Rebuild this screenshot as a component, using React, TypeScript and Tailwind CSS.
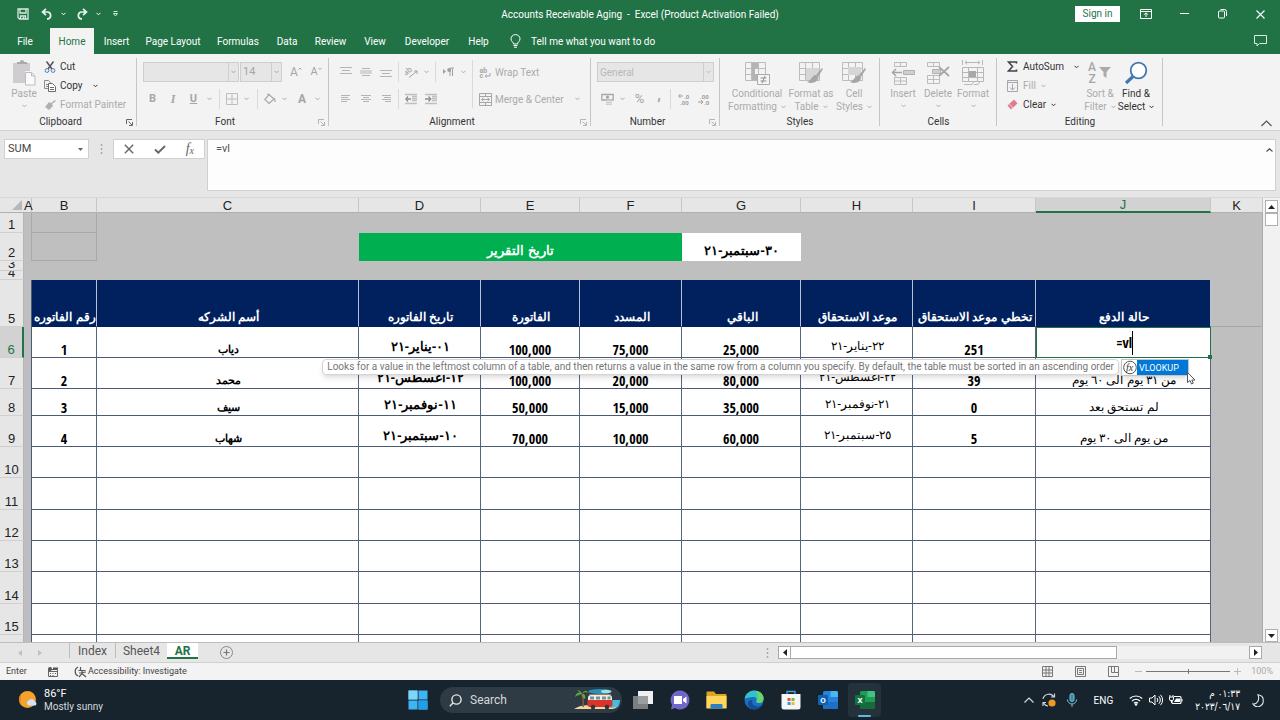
import React from "react";
import type { ReactNode } from "react";

const UI = "font-['Roboto','Noto_Sans',sans-serif]";
const AR = "font-['Noto_Sans',serif]";

function Svg({ w, h, vb, className = "", children }: { w: number; h: number; vb?: string; className?: string; children: ReactNode }) {
  return (
    <svg width={w} height={h} viewBox={vb ?? `0 0 ${w} ${h}`} fill="none" className={`shrink-0 ${className}`} aria-hidden="true">
      {children}
    </svg>
  );
}

function Chevron({ className = "" }: { className?: string }) {
  return (
    <Svg w={5} h={4} className={className}>
      <path d="M0.5 0.8 2.5 2.8 4.5 0.8" stroke="currentColor" />
    </Svg>
  );
}

function Slot({ label, className, children }: { label: string; className: string; children: ReactNode }) {
  return (
    <button type="button" aria-label={label} className={`flex h-5 shrink-0 items-center justify-center ${className}`}>
      {children}
    </button>
  );
}

function Sep({ className = "" }: { className?: string }) {
  return <span className={`h-5 w-px shrink-0 bg-[#dadada] ${className}`} />;
}

function Launcher({ dark = false }: { dark?: boolean }) {
  return (
    <button type="button" aria-label="More options" className={`absolute bottom-1 right-1 ${dark ? "text-[#666]" : "text-[#b5b5b5]"}`}>
      <Svg w={7} h={7}>
        <path d="M0.5 5V0.5H6M2.5 2.5 6 6M6.5 3V6.5H3" stroke="currentColor" />
      </Svg>
    </button>
  );
}

function Group({ title, className, launcher, children }: { title: string; className: string; launcher?: "dark" | "light"; children: ReactNode }) {
  return (
    <section aria-label={title} className={`relative flex shrink-0 flex-col ${className}`}>
      <div className="flex h-[62px] items-start">{children}</div>
      <div className={`flex h-4 items-center justify-center text-[10px] leading-4 text-[#333] ${launcher ? "pr-4" : ""}`}>{title}</div>
      {launcher && <Launcher dark={launcher === "dark"} />}
      <span className="absolute bottom-1 right-0 top-1 w-px bg-[#c6c6c6]" />
    </section>
  );
}

function BigButton({ icon, lines, className, dark = false, below = false }: { icon: ReactNode; lines: string[]; className: string; dark?: boolean; below?: boolean }) {
  return (
    <button type="button" className={`flex shrink-0 flex-col items-center whitespace-nowrap pt-[5px] text-[10px] leading-[13px] ${dark ? "text-[#333]" : "text-[#ababab]"} ${className}`}>
      <span className="flex h-7 items-center">{icon}</span>
      {lines.map((line, i) => (
        <span key={line} className="flex items-center gap-1">
          {line}
          {!below && i === lines.length - 1 && <Chevron />}
        </span>
      ))}
      {below && <Chevron className="mt-1" />}
    </button>
  );
}

function AlignIcon({ kind }: { kind: "top" | "middle" | "bottom" | "left" | "center" | "right" }) {
  const paths = {
    top: "M0 1.5H12M2 4.5H10M0 7.5H12",
    middle: "M2 2.5H10M0 5H12M0 7H12M2 9.5H10",
    bottom: "M0 4.5H12M2 7.5H10M0 10.5H12",
    left: "M1 2.5H10M1 4.5H8M1 6.5H10M1 8.5H7",
    center: "M1 2.5H11M3 4.5H9M1 6.5H11M3 8.5H9",
    right: "M2 2.5H11M4 4.5H11M2 6.5H11M5 8.5H11",
  };
  return (
    <Svg w={12} h={12}>
      <path d={paths[kind]} stroke="#b5b5b5" />
    </Svg>
  );
}

function Brush() {
  return (
    <>
      <path d="M24 8 18 15l2 2 5-8Z" fill="#a6a6a6" />
      <path d="M18 15c-4 0-4 5-9 7 4 2 11 1 11-5Z" fill="#a6a6a6" />
    </>
  );
}

function GridGlyph() {
  return <path d="M1.500 2.500h20v18h-20zM1.500 8.500h20M1.500 14.500h20M7.500 2.500v18M14.500 2.500v18" stroke="#bcbcbc" />;
}

const tabs = [
  ["Insert", "w-[43px]"],
  ["Page Layout", "w-[70px]"],
  ["Formulas", "w-[60px]"],
  ["Data", "w-[38px]"],
  ["Review", "w-[49px]"],
  ["View", "w-[40px]"],
  ["Developer", "w-[64px]"],
  ["Help", "w-[39px]"],
];

function TitleBar() {
  return (
    <header className="shrink-0 bg-[#217346] text-white">
      <div className="flex h-7 items-center">
        <div className="flex w-[300px] items-center pl-[17px]">
          <button type="button" aria-label="Save">
            <Svg w={12} h={12}>
              <path d="M1 1h10v10H2.500L1 9.500zM3 1v4h6V1M3.500 11V8h5v3M6.500 9v2" stroke="#d9ebe0" strokeWidth="1.300" />
            </Svg>
          </button>
          <button type="button" aria-label="Undo" className="ml-3">
            <Svg w={12} h={12}>
              <path d="M5 0.800 1.500 4 5 7.200M1.500 4H7a3.500 3.500 0 0 1 0 6.800H6" stroke="#e6f2ea" strokeWidth="1.700" />
            </Svg>
          </button>
          <Chevron className="ml-2" />
          <button type="button" aria-label="Redo" className="ml-[10px]">
            <Svg w={12} h={12}>
              <path d="M7 0.800 10.500 4 7 7.200M10.500 4H5a3.500 3.500 0 0 0 0 6.800H6" stroke="#e6f2ea" strokeWidth="1.700" />
            </Svg>
          </button>
          <Chevron className="ml-2" />
          <Svg w={5} h={6} className="ml-3">
            <path d="M0.500 0.500h4M0.500 2.500h4L2.500 5z" stroke="#cfe3d7" />
          </Svg>
        </div>
        <h1 className="flex-1 whitespace-pre text-center text-[10px]">Accounts Receivable Aging  -  Excel (Product Activation Failed)</h1>
        <div className="flex w-[300px] items-center justify-end pr-[15px]">
          <button type="button" className="mr-5 h-4 w-[45px] bg-white text-center text-[10px] leading-4 text-[#217346]">Sign in</button>
          <button type="button" aria-label="Ribbon display options" className="mr-7">
            <Svg w={12} h={10}>
              <path d="M0.500 0.500h11v9h-11zM0.500 2.500h11M6 8V4M4 5.800 6 3.800 8 5.800" stroke="white" />
            </Svg>
          </button>
          <button type="button" aria-label="Minimize" className="mr-[29px]">
            <Svg w={9} h={10}>
              <path d="M0 4.500h9" stroke="white" />
            </Svg>
          </button>
          <button type="button" aria-label="Restore" className="mr-[29px]">
            <Svg w={9} h={10}>
              <path d="M0.500 3a1 1 0 0 1 1-1h4a1 1 0 0 1 1 1v5a1 1 0 0 1-1 1h-4a1 1 0 0 1-1-1zM2.500 0.500h4a2 2 0 0 1 2 2V7" stroke="white" />
            </Svg>
          </button>
          <button type="button" aria-label="Close">
            <Svg w={9} h={9}>
              <path d="M0.500 0.500 8.500 8.500M8.500 0.500 0.500 8.500" stroke="white" strokeWidth="1.100" />
            </Svg>
          </button>
        </div>
      </div>
      <nav className="flex h-[26px] items-stretch text-[10px]" aria-label="Ribbon tabs">
        <button type="button" className="w-[50px] text-center">File</button>
        <button type="button" className="mr-px w-[44px] bg-[#f3f3f3] text-center text-[#217346]">Home</button>
        {tabs.map(([name, w]) => (
          <button type="button" key={name} className={`whitespace-nowrap text-center ${w}`}>
            {name}
          </button>
        ))}
        <button type="button" className="ml-3 flex items-center gap-[10px] whitespace-nowrap">
          <Svg w={11} h={14}>
            <path d="M3.500 10c0-2-2.500-2.500-2.500-5.200a4.500 4.200 0 0 1 9 0C10 7.500 7.500 8 7.500 10zM3.500 11.500h4M4 13.200h3" stroke="white" />
          </Svg>
          Tell me what you want to do
        </button>
        <button type="button" aria-label="Comments" className="ml-auto mr-[13px] self-center">
          <Svg w={13} h={12}>
            <path d="M0.500 0.500h12v8H5.500L3 11V8.500H0.500z" stroke="#d9ebe0" />
          </Svg>
        </button>
      </nav>
    </header>
  );
}

function Ribbon() {
  return (
    <div className="flex h-[77px] shrink-0 border-b border-[#d0d0d0] bg-[#f3f3f3]">
      <Group title="Clipboard" className="w-[137px]" launcher="dark">
        <BigButton
          className="ml-[11px] w-[26px]"
          below
          lines={["Paste"]}
          icon={
            <Svg w={24} h={26}>
              <path d="M1 3h17v8h-5v12H1z" fill="#cfcdd0" />
              <path d="M5 4V2h3a2 2 0 0 1 4 0h3v2z" fill="#aaa" />
              <path d="M13.500 12.500h6l3.500 3.500v9h-9.500zM19.500 12.500V16H23" fill="#fafafa" stroke="#bdbdbd" />
            </Svg>
          }
        />
        <div className="ml-[7px] flex flex-col pt-[3px] text-[10px] text-[#333]">
          <button type="button" className="flex h-[19px] items-center gap-1 whitespace-nowrap">
            <Svg w={12} h={12}>
              <path d="M2.500 0.500 8 8M9.500 0.500 4 8" stroke="#555" strokeWidth="1.500" />
              <circle cx="3" cy="9.500" r="1.900" stroke="#4d7fb0" />
              <circle cx="9" cy="9.500" r="1.900" stroke="#4d7fb0" />
            </Svg>
            Cut
          </button>
          <button type="button" className="flex h-[19px] items-center gap-1 whitespace-nowrap">
            <Svg w={12} h={12}>
              <path d="M0.500 0.500h4l2 2v6h-6zM2 4.500h3M2 6.500h3" stroke="#8a8a8a" />
              <path d="M4.500 3.500h4l3 3v5h-7zM6 7.500h4M6 9.500h4" fill="white" stroke="#6a6a6a" />
            </Svg>
            Copy
            <Chevron className="ml-[6px]" />
          </button>
          <button type="button" className="flex h-[19px] items-center gap-1 whitespace-nowrap text-[#ababab]">
            <Svg w={12} h={12}>
              <path d="M11 1 7 4 5 3 1 8l4 3 4-4-1-2 4-3z" fill="#b0b0b0" />
            </Svg>
            Format Painter
          </button>
        </div>
      </Group>

      <Group title="Font" className="w-[192px] text-[#a6a6a6]" launcher="light">
        <div className="flex w-full flex-col pl-[6px] pt-2">
          <div className="flex h-5 items-center text-[11px]">
            <button type="button" aria-label="Font name" className="mr-px flex h-5 w-24 items-center justify-end border border-[#cecece] bg-[#e6e6e6]">
              <span className="flex h-full w-[10px] items-center justify-center border-l border-[#cecece]"><Chevron /></span>
            </button>
            <button type="button" aria-label="Font size" className="flex h-5 w-[42px] items-center justify-between border border-[#cecece] bg-[#e6e6e6] pl-[2px]">
              14
              <span className="flex h-full w-[10px] items-center justify-center border-l border-[#cecece]"><Chevron /></span>
            </button>
            <Slot label="Increase font size" className="ml-1 w-5 text-[12px]">
              A<Svg w={4} h={10}><path d="M0.500 2.500 2 1 3.500 2.500" stroke="currentColor" /></Svg>
            </Slot>
            <Slot label="Decrease font size" className="w-5 text-[11px]">
              A<Svg w={4} h={10}><path d="M0.500 1 2 2.500 3.500 1" stroke="currentColor" /></Svg>
            </Slot>
          </div>
          <div className="mt-[7px] flex h-5 items-center">
            <Slot label="Bold" className="w-[19px] text-[11px] font-bold">B</Slot>
            <Slot label="Italic" className="w-[22px] font-['Liberation_Serif',serif] text-[12px] font-bold italic">I</Slot>
            <Slot label="Underline" className="w-[19px] text-[11px] font-bold underline">U</Slot>
            <Slot label="Underline style" className="w-3"><Chevron /></Slot>
            <Sep className="ml-1" />
            <Slot label="Borders" className="w-[23px]">
              <Svg w={12} h={12}><path d="M0.500 0.500h11v11h-11zM6 0v12M0 6h12" stroke="#bdbdbd" /></Svg>
            </Slot>
            <Slot label="Border style" className="w-[6px]"><Chevron /></Slot>
            <Sep className="ml-2" />
            <Slot label="Fill colour" className="w-[23px]">
              <Svg w={12} h={12}><path d="M5 1.500 10 6 5 10.500 0.800 6.500zM4 3V0.500M9.500 5c2 1 1.500 4 1.500 4" stroke="#a8a8a8" strokeWidth="1.200" /></Svg>
            </Slot>
            <Slot label="Fill palette" className="w-[6px]"><Chevron /></Slot>
            <Slot label="Font colour" className="ml-1 w-[22px] text-[12px] font-bold">A</Slot>
            <Slot label="Font palette" className="w-[9px]"><Chevron /></Slot>
          </div>
        </div>
      </Group>

      <Group title="Alignment" className="w-[262px] text-[#ababab]" launcher="light">
        <div className="flex flex-col pl-[7px] pt-2">
          <div className="flex h-5 items-center">
            <Slot label="Top align" className="w-5"><AlignIcon kind="top" /></Slot>
            <Slot label="Middle align" className="w-5"><AlignIcon kind="middle" /></Slot>
            <Slot label="Bottom align" className="w-5"><AlignIcon kind="bottom" /></Slot>
            <Sep className="ml-[2px]" />
            <Slot label="Orientation" className="w-6">
              <Svg w={13} h={12}>
                <g transform="rotate(-40 4 6)"><text x="-1" y="7" fontSize="8" fill="#a0a0a0">ab</text></g>
                <path d="M4 11.500 12 5M12 8V5H9" stroke="#a0a0a0" />
              </Svg>
            </Slot>
            <Slot label="Orientation options" className="w-[6px]"><Chevron /></Slot>
            <Sep className="ml-[6px]" />
            <Slot label="Text direction" className="w-6">
              <Svg w={11} h={10}><path d="M0 2v5l3-2.500z" fill="#a0a0a0" /><path d="M7 9V1.500M9.500 9V1.500M11 1H7" stroke="#a0a0a0" /><circle cx="6.200" cy="3" r="2" fill="#a0a0a0" /></Svg>
            </Slot>
            <Slot label="Direction options" className="w-[6px]"><Chevron /></Slot>
          </div>
          <div className="mt-[7px] flex h-5 items-center">
            <Slot label="Align left" className="w-5"><AlignIcon kind="left" /></Slot>
            <Slot label="Center" className="w-5"><AlignIcon kind="center" /></Slot>
            <Slot label="Align right" className="w-5"><AlignIcon kind="right" /></Slot>
            <Sep className="ml-[2px]" />
            <Slot label="Decrease indent" className="w-6">
              <Svg w={12} h={12}><path d="M0 1.500h12M0 10.500h12M7 3.500h5M7 5.500h5M7 7.500h5" stroke="#bfbfbf" strokeWidth="1.500" /><path d="M6 6H1M3 3.500 0.800 6 3 8.500" stroke="#909090" strokeWidth="1.300" /></Svg>
            </Slot>
            <Slot label="Increase indent" className="w-4">
              <Svg w={12} h={12}><path d="M0 1.500h12M0 10.500h12M7 3.500h5M7 5.500h5M7 7.500h5" stroke="#bfbfbf" strokeWidth="1.500" /><path d="M0 6H5M3.500 3.500 5.800 6 3.500 8.500" stroke="#909090" strokeWidth="1.300" /></Svg>
            </Slot>
          </div>
        </div>
        <span className="ml-auto mt-[6px] h-12 w-px bg-[#dadada]" />
        <div className="flex w-[118px] flex-col pl-[6px] pt-2 text-[10px]">
          <button type="button" className="flex h-5 items-center gap-[3px] whitespace-nowrap">
            <Svg w={13} h={13}>
              <text x="0.500" y="6.500" fontSize="7" fontWeight="700" fill="#a6a6a6">ab</text>
              <text x="0.500" y="12" fontSize="7" fontWeight="700" fill="#a6a6a6">c</text>
              <path d="M11 7v3H6M8 8.500 6.200 10 8 11.500" stroke="#a6a6a6" />
            </Svg>
            Wrap Text
          </button>
          <button type="button" className="mt-[7px] flex h-5 items-center gap-[3px] whitespace-nowrap">
            <Svg w={13} h={13}>
              <path d="M0.500 0.500h12v12h-12zM0.500 3.500h12M0.500 9.500h12M6.500 0.500v3M6.500 9.500v3M2.500 6.500h8M4.500 4.800 2.500 6.500 4.500 8.200M8.500 4.800 10.500 6.500 8.500 8.200" stroke="#a6a6a6" />
            </Svg>
            Merge &amp; Center
            <Chevron className="ml-2" />
          </button>
        </div>
      </Group>

      <Group title="Number" className="w-[129px] text-[#a6a6a6]" launcher="light">
        <div className="flex w-full flex-col pl-[6px] pt-2">
          <button type="button" className="flex h-5 w-[117px] items-center justify-between border border-[#cecece] bg-[#e6e6e6] pl-[2px] text-[10px] text-[#b8b8b8]">
            General
            <span className="flex h-full w-[10px] items-center justify-center border-l border-[#cecece]"><Chevron /></span>
          </button>
          <div className="mt-[7px] flex h-5 items-center">
            <Slot label="Accounting format" className="w-[21px]">
              <Svg w={13} h={12}><path d="M0.800 1.500h11.400v5.500H0.800z" stroke="#a8a8a8" strokeWidth="1.300" /><circle cx="6.500" cy="4.200" r="1.600" fill="#a8a8a8" /><path d="M5 7.500h6M5 9.500h6M5 11.500h6" stroke="#cfcfcf" strokeWidth="1.500" /></Svg>
            </Slot>
            <Slot label="Accounting options" className="w-[9px]"><Chevron /></Slot>
            <Slot label="Percent" className="w-[25px] text-[13px]">%</Slot>
            <Slot label="Comma" className="w-[14px] text-[15px] font-bold"><span className="pb-2">,</span></Slot>
            <Sep className="ml-[4px]" />
            <Slot label="Increase decimal" className="w-[25px]">
              <Svg w={12} h={12}><text x="6" y="5.500" fontSize="6" fontWeight="700" fill="#a0a0a0">.0</text><text x="2" y="11.500" fontSize="6" fontWeight="700" fill="#a0a0a0">.00</text><path d="M5 3H0.800M2.500 1 0.600 3 2.500 5" stroke="#a0a0a0" /></Svg>
            </Slot>
            <Slot label="Decrease decimal" className="w-[15px]">
              <Svg w={12} h={12}><text x="2" y="5.500" fontSize="6" fontWeight="700" fill="#a0a0a0">.00</text><text x="6" y="11.500" fontSize="6" fontWeight="700" fill="#a0a0a0">.0</text><path d="M0 9H4.500M3 7 4.900 9 3 11" stroke="#a0a0a0" /></Svg>
            </Slot>
          </div>
        </div>
      </Group>

      <Group title="Styles" className="w-[160px]">
        <BigButton className="ml-[7px] w-[60px]" lines={["Conditional", "Formatting"]} icon={
          <Svg w={26} h={26}><GridGlyph /><path d="M8 3h6v5h-3v6h3v6H8z" fill="#b4b4b4" /><path d="M13.500 14.500h12v10h-12z" fill="#f5f5f5" stroke="#ababab" /><path d="M16.500 18h6M16.500 21h6M21 15.800l-3 7.500" stroke="#909090" /></Svg>
        } />
        <BigButton className="w-[48px]" lines={["Format as", "Table"]} icon={
          <Svg w={26} h={26}><GridGlyph /><path d="M8 8h13v12H8z" fill="#d6d6d6" /><Brush /></Svg>
        } />
        <BigButton className="w-[38px]" lines={["Cell", "Styles"]} icon={
          <Svg w={26} h={26}><GridGlyph /><path d="M7 7h13v8H7z" fill="#d6d6d6" /><Brush /></Svg>
        } />
      </Group>

      <Group title="Cells" className="w-[117px]">
        <BigButton className="ml-[7px] w-[32px]" below lines={["Insert"]} icon={
          <Svg w={24} h={25}><path d="M3.500 1.500h12v4h-12zM9.500 1.500v4M3.500 16.500h12v7h-12zM9.500 16.500v7M3.500 20h12" stroke="#bcbcbc" /><path d="M12.500 9.500h11v4h-11z" fill="#cfcfcf" stroke="#b0b0b0" /><path d="M11 11.500H1.500M5 8 1.500 11.500 5 15" stroke="#a6a6a6" strokeWidth="1.500" /></Svg>
        } />
        <BigButton className="w-[38px]" below lines={["Delete"]} icon={
          <Svg w={24} h={25}><path d="M1.500 1.500h12v4h-12zM7.500 1.500v4M1.500 14.500h12v8h-12zM7.500 14.500v8M1.500 18.500h12" stroke="#bcbcbc" /><path d="M6.500 8.500h8v4h-8z" fill="#cfcfcf" stroke="#b0b0b0" /><path d="M13 6 23 15M23 6 13 15" stroke="#a6a6a6" strokeWidth="1.700" /></Svg>
        } />
        <BigButton className="w-[32px]" below lines={["Format"]} icon={
          <Svg w={24} h={26}><path d="M1.500 0v5M21.500 0v5M4 2.500h15M6 0.800 4 2.500 6 4.200M17 0.800 19 2.500 17 4.200M1.500 7.500h21v14h-21zM1.500 12.500h21M1.500 17.500h21M7.500 7.500v14M16.500 7.500v14M3 24.500h8l2-3M13 24.500h4l2-3" stroke="#b8b8b8" /><path d="M8 11h7v6H8z" fill="#a8a8a8" /></Svg>
        } />
      </Group>

      <Group title="Editing" className="w-[166px]">
        <div className="ml-[10px] flex w-[76px] flex-col pt-[3px] text-[10px] text-[#333]">
          <button type="button" className="flex h-[19px] items-center gap-[5px]">
            <Svg w={11} h={11}><path d="M9.500 2.500V1H1.500l4 4.500-4 4.500h8V8.500" stroke="#444" strokeWidth="1.600" /></Svg>
            <span className="flex-1 text-left">AutoSum</span>
            <Chevron className="mr-1" />
          </button>
          <button type="button" className="flex h-[19px] items-center gap-[5px] text-[#ababab]">
            <Svg w={11} h={12}><path d="M0.500 0.500h10v11h-10zM0.500 2.500h10M5.500 4v6M3 7.500l2.500 2.500L8 7.500" stroke="#a6a6a6" /></Svg>
            Fill
            <Chevron />
          </button>
          <button type="button" className="flex h-[19px] items-center gap-[5px]">
            <Svg w={11} h={11}><path d="M7 0.500 10.500 4.500 4 10.500 0.500 6.500z" fill="#e07b8e" /><path d="M2.500 5 6 9" stroke="#f4ccd3" /></Svg>
            Clear
            <Chevron />
          </button>
        </div>
        <BigButton className="w-[34px]" lines={["Sort &", "Filter"]} icon={
          <Svg w={24} h={24}>
            <text x="0" y="10" fontSize="12" fontWeight="500" fill="#a6a6a6">A</text>
            <text x="0.500" y="22" fontSize="12" fontWeight="500" fill="#a6a6a6">Z</text>
            <path d="M11 6h12l-4.500 5v6l-3-2v-4z" fill="#ababab" />
          </Svg>
        } />
        <BigButton dark className="w-[38px]" lines={["Find &", "Select"]} icon={
          <Svg w={24} h={24}><circle cx="14.500" cy="9.500" r="7.800" fill="white" stroke="#4079b0" strokeWidth="1.800" /><path d="M9 15.500 2 22" stroke="#4079b0" strokeWidth="3.200" /></Svg>
        } />
      </Group>
      <button type="button" aria-label="Collapse ribbon" className="mb-[3px] ml-auto mr-2 self-end text-[#555]">
        <Svg w={11} h={7}><path d="M0.500 6 5.500 1 10.500 6" stroke="currentColor" strokeWidth="1.200" /></Svg>
      </button>
    </div>
  );
}

function FormulaBar() {
  return (
    <div className="flex h-[67px] shrink-0 items-start border-b border-[#d8d8d8] bg-[#e6e6e6] pl-1 pr-1 pt-2">
      <div className="flex h-5 w-[85px] items-center border border-[#d0d0d0] bg-white pr-[5px]">
        <input aria-label="Name box" defaultValue="SUM" className="w-full min-w-0 bg-transparent pl-[3px] text-[11px] text-[#444] outline-none" />
        <Svg w={5} h={3}><path d="M0 0h5L2.500 3z" fill="#666" /></Svg>
      </div>
      <Svg w={3} h={12} className="ml-[11px] mt-1"><path d="M1.500 1v2M1.500 5v2M1.500 9v2" stroke="#aaa" strokeWidth="1.500" /></Svg>
      <div className="ml-[10px] flex h-5 w-[92px] items-center justify-around border border-[#d0d0d0] bg-white text-[#666]">
        <button type="button" aria-label="Cancel">
          <Svg w={10} h={10}><path d="M0.800 0.800 9.200 9.200M9.200 0.800 0.800 9.200" stroke="currentColor" strokeWidth="1.400" /></Svg>
        </button>
        <button type="button" aria-label="Enter">
          <Svg w={12} h={9}><path d="M1 4.500 4.300 7.700 11 1" stroke="currentColor" strokeWidth="1.900" /></Svg>
        </button>
        <button type="button" aria-label="Insert function" className="flex items-end font-['Liberation_Serif',serif] text-[14px] italic leading-4">
          f<span className="text-[10px] leading-3">x</span>
        </button>
      </div>
      <div className="ml-[2px] flex h-[52px] flex-1 border border-[#d0d0d0] bg-[#fdfdfd]">
        <textarea aria-label="Formula" defaultValue="=vl" className="h-full flex-1 resize-none bg-transparent px-2 pt-px text-[11px] leading-4 text-[#555] outline-none" />
        <button type="button" aria-label="Collapse formula bar" className="flex w-3 justify-center pt-2 text-[#555]">
          <Svg w={7} h={4}><path d="M0.500 3.500 3.500 0.800 6.500 3.500" stroke="currentColor" strokeWidth="1.300" /></Svg>
        </button>
      </div>
    </div>
  );
}

const headers = ["رقم الفاتوره", "أسم الشركه", "تاريخ الفاتوره", "الفاتورة", "المسدد", "الباقي", "موعد الاستحقاق", "تخطي موعد الاستحقاق", "حالة الدفع"];

type Row = { n: number; h: string; cells: string[] };
const rows: Row[] = [
  { n: 6, h: "h-[31px]", cells: ["1", "دياب", "٠١-يناير-٢١", "100,000", "75,000", "25,000", "٢٢-يناير-٢١", "251", ""] },
  { n: 7, h: "h-[31px]", cells: ["2", "محمد", "١٢-أغسطس-٢١", "100,000", "20,000", "80,000", "٢٢-أغسطس-٢١", "39", "من ٣١ يوم الى ٦٠ يوم"] },
  { n: 8, h: "h-[27px]", cells: ["3", "سيف", "١١-نوفمبر-٢١", "50,000", "15,000", "35,000", "٢١-نوفمبر-٢١", "0", "لم تستحق بعد"] },
  { n: 9, h: "h-[31px]", cells: ["4", "شهاب", "١٠-سبتمبر-٢١", "70,000", "10,000", "60,000", "٢٥-سبتمبر-٢١", "5", "من يوم الى ٣٠ يوم"] },
  { n: 10, h: "h-[31px]", cells: [] },
  { n: 11, h: "h-[32px]", cells: [] },
  { n: 12, h: "h-[31px]", cells: [] },
  { n: 13, h: "h-[31px]", cells: [] },
  { n: 14, h: "h-[32px]", cells: [] },
  { n: 15, h: "h-[31px]", cells: [] },
  { n: 16, h: "h-[31px]", cells: [] },
];

const NUM = "font-['Open_Sans_Condensed','Roboto_Condensed','Liberation_Sans_Narrow',sans-serif] text-[14px] font-bold leading-[15px]";
const cellStyle = [
  NUM,
  `${AR} text-[11px] font-bold`,
  `${AR} text-[13px] font-bold`,
  NUM,
  NUM,
  NUM,
  `${AR} text-[12px]`,
  NUM,
  `${AR} text-[12px]`,
];

function RowHead({ children, active = false }: { children: ReactNode; active?: boolean }) {
  return (
    <th scope="row" className={`overflow-hidden border-b border-b-[#cfcfcf] border-r p-0 text-center align-bottom text-[13px] font-normal leading-[14px] ${active ? "border-r-2 border-r-[#217346] bg-[#d2d2d2] text-[#217346]" : "border-r-[#b5b5b5] bg-[#e6e6e6] text-[#222]"}`}>
      {children}
    </th>
  );
}

function ActiveCell() {
  return (
    <td className="relative border border-[#217346] bg-white p-0 align-middle">
      <div className="flex h-7 items-center justify-center">
        <input aria-label="Cell J6" defaultValue="=vl" className={`w-[18px] bg-transparent text-right outline-none ${NUM}`} />
        <span className="h-6 w-px bg-black" />
      </div>
      <div role="tooltip" className={`absolute right-[91px] top-[31px] z-10 h-4 whitespace-nowrap rounded-sm border border-[#d5d5d5] bg-white px-1 text-[10px] leading-[13px] text-[#767676] shadow-md ${UI}`}>
        Looks for a value in the leftmost column of a table, and then returns a value in the same row from a column you specify. By default, the table must be sorted in an ascending order
      </div>
      <div role="listbox" aria-label="Functions" className={`absolute left-[84px] top-[31px] z-10 flex h-[17px] w-[68px] items-stretch border border-[#c5c5c5] bg-white shadow-md ${UI}`}>
        <Svg w={15} h={15}>
          <circle cx="8" cy="7.500" r="6.300" stroke="#555" />
          <text x="4" y="11" fontSize="10" fontStyle="italic" fontFamily="Liberation Serif" fill="#333">fx</text>
        </Svg>
        <div role="option" aria-selected="true" className="flex-1 bg-[#0078d7] pl-[2px] text-left text-[9px] leading-[16px] text-white">VLOOKUP</div>
        <Svg w={9} h={13} className="absolute -right-2 top-3">
          <path d="M0.500 0.500V10.500L3 8.500 4.500 12 6.300 11.200 4.800 8H8z" fill="white" stroke="#555" />
        </Svg>
      </div>
      <span className="absolute -bottom-[2px] -right-[2px] size-1 bg-[#217346]" />
    </td>
  );
}

const cols = ["w-6", "w-[8px]", "w-[65px]", "", "w-[122px]", "w-[99px]", "w-[102px]", "w-[119px]", "w-[112px]", "w-[123px]", "w-[175px]", "w-[52px]"];

function Sheet() {
  const line = "border-b border-r border-b-[#4c5b74] border-r-[#56657e]";
  return (
    <div className="flex min-h-0 flex-1 bg-[#e6e6e6]">
      <div className="min-w-0 flex-1 overflow-hidden">
        <table className="w-full table-fixed border-separate border-spacing-0 font-['Liberation_Sans',sans-serif]">
          <colgroup>
            {cols.map((w, i) => (
              <col key={i} className={w} />
            ))}
          </colgroup>
          <thead>
            <tr className="h-[15px] text-[13px] leading-[13px] text-[#222]">
              <th aria-label="Select all" className="border-b border-[#b0b0b0] bg-[#e6e6e6] p-0 align-bottom">
                <Svg w={10} h={10} className="mb-[2px] ml-3"><path d="M10 0V10H0z" fill="#b8b8b8" /></Svg>
              </th>
              {"ABCDEFGHIJK".split("").map((c) => (
                <th key={c} scope="col" className={`border-r border-r-[#c6c6c6] p-0 text-center font-normal ${c === "J" ? "border-b-2 border-b-[#217346] bg-[#d2d2d2] text-[#217346]" : "border-b border-b-[#b0b0b0] bg-[#e6e6e6]"}`}>
                  {c}
                </th>
              ))}
            </tr>
          </thead>
          <tbody className="leading-[16px]">
            <tr className="h-[20px]">
              <RowHead>1</RowHead>
              <td className="border-r border-[#aaa] bg-[#bfbfbf] p-0" />
              <td className="border-b border-r border-[#a8a8a8] bg-[#bfbfbf] p-0" />
              <td colSpan={9} className="border-r border-[#aaa] bg-[#bfbfbf] p-0" />
            </tr>
            <tr className="h-[28px]">
              <RowHead>2</RowHead>
              <td className="border-r border-[#aaa] bg-[#bfbfbf] p-0" />
              <td className="border-b border-r border-[#a8a8a8] bg-[#bfbfbf] p-0" />
              <td className="bg-[#bfbfbf] p-0" />
              <td colSpan={3} dir="rtl" className={`bg-[#00b050] p-0 pb-[3px] text-center align-bottom text-[13px] text-white ${AR} font-bold`}>تاريخ التقرير</td>
              <td dir="rtl" className={`bg-white p-0 pb-[3px] text-center align-bottom text-[13px] font-bold ${AR}`}>٣٠-سبتمبر-٢١</td>
              <td colSpan={4} className="border-r border-[#aaa] bg-[#bfbfbf] p-0" />
            </tr>
            {["3", "4"].map((n) => (
              <tr key={n} className={n === "3" ? "h-[10px]" : "h-[9px]"}>
                <RowHead>
                  <div className="flex h-2 items-end justify-center overflow-hidden leading-[12px]">{n}</div>
                </RowHead>
                <td colSpan={11} className="border-r border-[#aaa] bg-[#bfbfbf] p-0" />
              </tr>
            ))}
            <tr className="h-[47px]">
              <RowHead>5</RowHead>
              <td className="border-r border-[#4c5b74] bg-[#bfbfbf] p-0" />
              {headers.map((h) => (
                <th key={h} scope="col" dir="rtl" className={`whitespace-nowrap border-b border-r border-b-[#001f5c] border-r-[#b8c1d3] bg-[#00205e] p-0 pb-px text-center align-bottom text-[12px] font-bold text-white ${AR}`}>
                  {h}
                </th>
              ))}
              <td className="border-b border-r border-[#a8a8a8] bg-[#bfbfbf] p-0" />
            </tr>
            {rows.map((r) => (
              <tr key={r.n} className={r.h}>
                <RowHead active={r.n === 6}>{r.n}</RowHead>
                <td className="border-r border-[#4c5b74] bg-[#bdbdc2] p-0" />
                {cellStyle.map((s, i) =>
                  r.n === 6 && i === 8 ? (
                    <ActiveCell key={i} />
                  ) : (
                    <td key={i} dir={s === NUM ? "ltr" : "rtl"} className={`whitespace-nowrap bg-white p-0 text-center align-bottom text-black ${i === 2 || i === 6 ? "pb-[3px]" : ""} ${line} ${s}`}>
                      {r.cells[i]}
                    </td>
                  ),
                )}
                <td className="border-r border-[#aaa] bg-[#bfbfbf] p-0" />
              </tr>
            ))}
          </tbody>
        </table>
      </div>
      <div className="flex w-[17px] shrink-0 flex-col items-center bg-[#f1f1f1]">
        <button type="button" aria-label="Scroll up" className="mt-[2px] flex h-[13px] w-[13px] items-center justify-center border border-[#b0b0b0] bg-white">
          <Svg w={7} h={4}><path d="M0 4h7L3.500 0z" fill="#222" /></Svg>
        </button>
        <span className="h-[13px] w-[13px] border border-[#b0b0b0] bg-white" />
        <button type="button" aria-label="Scroll down" className="mt-auto flex h-[13px] w-[13px] items-center justify-center border border-[#b0b0b0] bg-white">
          <Svg w={7} h={4}><path d="M0 0h7L3.500 4z" fill="#222" /></Svg>
        </button>
      </div>
    </div>
  );
}

function SheetTabs() {
  return (
    <div className="flex h-5 shrink-0 items-stretch border-t border-[#bdbdbd] bg-[#e6e6e6] text-[12px] leading-4 text-[#555]">
      <div className="flex w-[69px] items-center gap-4 pl-[18px]">
        <Svg w={4} h={6}><path d="M4 0v6L0 3z" fill="#c0c0c0" /></Svg>
        <Svg w={4} h={6}><path d="M0 0v6L4 3z" fill="#c0c0c0" /></Svg>
      </div>
      <button type="button" className="mb-1 w-[46px] border-l border-[#bdbdbd]">Index</button>
      <button type="button" className="mb-1 w-[52px] border-l border-[#bdbdbd]">Sheet4</button>
      <button type="button" className="mb-[3px] w-[31px] border-b-2 border-[#217346] bg-white font-bold text-[#217346]">AR</button>
      <button type="button" aria-label="New sheet" className="ml-[22px]">
        <Svg w={13} h={13}><circle cx="6.500" cy="6.500" r="6" stroke="#888" /><path d="M6.500 3.500v6M3.500 6.500h6" stroke="#777" strokeWidth="1.200" /></Svg>
      </button>
      <div className="ml-auto flex w-[514px] items-center">
        <Svg w={3} h={12}><path d="M1.500 1v2M1.500 5v2M1.500 9v2" stroke="#aaa" strokeWidth="1.500" /></Svg>
        <button type="button" aria-label="Scroll left" className="ml-[9px] flex size-[13px] items-center justify-center border border-[#a8a8a8] bg-white">
          <Svg w={4} h={7}><path d="M4 0v7L0 3.500z" fill="#222" /></Svg>
        </button>
        <div className="flex h-[13px] flex-1 bg-[#f1f1f1]">
          <span className="h-[13px] w-[326px] border border-l-0 border-[#a8a8a8] bg-white" />
        </div>
        <button type="button" aria-label="Scroll right" className="mr-[18px] flex size-[13px] items-center justify-center border border-[#a8a8a8] bg-white">
          <Svg w={4} h={7}><path d="M0 0v7L4 3.500z" fill="#222" /></Svg>
        </button>
      </div>
    </div>
  );
}

function StatusBar() {
  return (
    <div className="flex h-[18px] shrink-0 items-center border-t border-[#d0d0d0] bg-[#f3f3f3] pl-[6px] pr-[7px] text-[9px] text-[#444]">
      <span className="w-[42px]">Enter</span>
      <Svg w={10} h={10}><path d="M0.500 2.500h9v7h-9zM0.500 4.500h9M2 6.500h1M4.500 6.500h1M7 6.500h1M2 8.500h1M4.500 8.500h1" stroke="#666" /><circle cx="2" cy="2" r="2" fill="#555" /><path d="M5 1.500h5" stroke="#555" strokeWidth="2" /></Svg>
      <button type="button" className="ml-4 flex items-center gap-px">
        <Svg w={13} h={12}><path d="M4 1a5 5 0 0 0 0 9M6.500 1v3M4.500 4.500h7M8 4v3.500L5 11M8 7.500l4 3.500M5 7l7-1" stroke="#555" strokeWidth="1.200" /></Svg>
        Accessibility: Investigate
      </button>
      <div className="ml-auto flex items-center">
        <button type="button" aria-label="Normal view" className="mr-[22px]">
          <Svg w={11} h={11}><path d="M0.500 0.500h10v10h-10zM4 0.500v10M7 0.500v10M0.500 4h10M0.500 7h10" stroke="#777" /></Svg>
        </button>
        <button type="button" aria-label="Page layout view" className="mr-[22px]">
          <Svg w={11} h={11}><path d="M0.500 0.500h10v10h-10zM2.500 2.500h6v6h-6zM4 4.500h3M4 6.500h3" stroke="#777" /></Svg>
        </button>
        <button type="button" aria-label="Page break view" className="mr-4">
          <Svg w={11} h={11}><path d="M0.500 0.500h10v10h-10zM3.500 0.500V6.500h3V0.500M6.500 6.500H10" stroke="#777" /></Svg>
        </button>
        <button type="button" aria-label="Zoom out"><Svg w={7} h={7}><path d="M0 3.500h7" stroke="#bbb" /></Svg></button>
        <Svg w={84} h={7} className="mx-1"><path d="M0 3.500h84M42.500 1v5" stroke="#777" /></Svg>
        <button type="button" aria-label="Zoom in"><Svg w={7} h={7}><path d="M0 3.500h7M3.500 0v7" stroke="#bbb" /></Svg></button>
        <span className="ml-[10px] text-[#aaa]">100%</span>
      </div>
    </div>
  );
}

function BeachArt() {
  return (
    <Svg w={48} h={24}>
      <path d="M0 21C8 16 14 17 20 18h24c-1 2-4 3-6 3z" fill="#f0d9a0" />
      <path d="M38 12h8c0 3-1 5-2 7l-8 1z" fill="#49bde0" />
      <path d="M8 6c1 4 2 8 1 13" stroke="#8a5a34" strokeWidth="1.500" />
      <path d="M8 6C5 3 2 5 1 9c2-2 5-2 7-3 0 3 1 4 3 5 1-3 0-5-3-5 2-2 4-2 6-1-1-3-4-3-6 1-1-3-3-4-5-4" fill="#62a344" />
      <rect x="14" y="7" width="24" height="12" rx="3" fill="#f3eee4" />
      <path d="M13.500 12H38.500v5a2 2 0 0 1-2 2h-21a2 2 0 0 1-2-2z" fill="#d9342b" />
      <path d="M16 8.500h4v3h-4zM22 8.500h4v3h-4zM28 8.500h4v3h-4zM33.500 8.500h3v3h-3z" fill="#6b93a8" />
      <circle cx="19" cy="19" r="2.300" fill="#333" /><circle cx="33" cy="19" r="2.300" fill="#333" />
      <ellipse cx="26" cy="3.500" rx="12" ry="2.500" fill="#2c8fb8" /><ellipse cx="32" cy="3.500" rx="5" ry="1.800" fill="#9fe0e0" />
      <path d="M15 6.500h22" stroke="#9a7a4a" />
    </Svg>
  );
}

function TaskIcon({ label, className = "", children }: { label: string; className?: string; children: ReactNode }) {
  return (
    <button type="button" aria-label={label} className={`relative flex h-[34px] w-[33px] items-center justify-center rounded ${className}`}>
      {children}
    </button>
  );
}

function OfficeIcon({ letter, tile, a, b, c }: { letter: string; tile: string; a: string; b: string; c: string }) {
  return (
    <Svg w={20} h={20}>
      <rect x="5" y="1" width="15" height="18" rx="1.500" fill={a} />
      <path d="M12.500 1H18.500a1.500 1.500 0 0 1 1.500 1.500V7h-7.500z" fill={b} />
      <path d="M5 12h15v5.500a1.500 1.500 0 0 1-1.500 1.500h-12A1.500 1.500 0 0 1 5 17.500z" fill={c} />
      <rect x="0" y="5" width="10" height="10" rx="1" fill={tile} />
      <text x="5" y="12.800" fontSize="8" fontWeight="700" textAnchor="middle" fill="white">{letter}</text>
    </Svg>
  );
}

function Taskbar() {
  return (
    <footer className="flex h-10 shrink-0 items-center bg-[#17242d] pr-[2px] text-white">
      <button type="button" className="flex flex-1 basis-0 items-center gap-[6px] pl-[18px] text-left text-[11px] leading-[13px]">
        <Svg w={20} h={20}>
          <circle cx="9.500" cy="9.500" r="8.500" fill="#f5a32c" />
          <path d="M3 15A8.500 8.500 0 0 1 3 4z" fill="#e98a1c" />
          <path d="M10.500 15.500a3 3 0 0 1 .5-5.500 4 4 0 0 1 6 1.500 2.300 2.300 0 0 1 .5 4z" fill="#d4e2f5" />
        </Svg>
        <span>
          <span className="block">86°F</span>
          <span className="block text-[10px] text-[#d5d9dc]">Mostly sunny</span>
        </span>
      </button>
      <div className="flex items-center">
        <TaskIcon label="Start">
          <Svg w={20} h={20}>
            <path d="M0.500 0.500h9v9h-9zM10.500 0.500h9v9h-9zM0.500 10.500h9v9h-9zM10.500 10.500h9v9h-9z" fill="#3fb4f3" />
            <path d="M0.500 0.500h9v9h-9z" fill="#7fd6fb" />
            <path d="M10.500 10.500h9v9h-9z" fill="#229ee8" />
          </Svg>
        </TaskIcon>
        <label className="ml-[6px] flex h-[26px] w-[182px] items-center overflow-hidden rounded-full bg-[#2e3b44] pl-[9px]">
          <Svg w={13} h={13}><circle cx="7.500" cy="5.500" r="4.600" stroke="#e5e8ea" strokeWidth="1.400" /><path d="M4.200 8.800 0.800 12.200" stroke="#e5e8ea" strokeWidth="1.500" /></Svg>
          <input aria-label="Search" placeholder="Search" className="ml-2 w-[100px] min-w-0 flex-1 bg-transparent text-[12px] outline-none placeholder:text-[#d5d9dc]" />
          <BeachArt />
        </label>
        <TaskIcon label="Task view" className="ml-1">
          <Svg w={20} h={20}><path d="M5 1h15v13H5z" fill="#f0f0f0" /><path d="M0 6h15v13H0z" fill="#8b8f92" fillOpacity="0.850" /></Svg>
        </TaskIcon>
        <TaskIcon label="Chat" className="ml-1">
          <Svg w={20} h={20}><path d="M10 0.500a9.500 9.500 0 1 1-5 17.600L1 19.500l1-4.500A9.500 9.500 0 0 1 10 0.500z" fill="#7068c8" /><path d="M4 6h8v8H4zM13 9l3.500-2.500v7L13 11z" fill="white" /></Svg>
        </TaskIcon>
        <TaskIcon label="File Explorer" className="ml-1">
          <Svg w={21} h={20}><path d="M0.500 2.500a1 1 0 0 1 1-1H8l2 2.500h9.500a1 1 0 0 1 1 1V18H0.500z" fill="#e0a324" /><path d="M0.500 6h20v12.500H0.500z" fill="#ffd65c" /><path d="M4.500 18.500V15a1 1 0 0 1 1-1h10a1 1 0 0 1 1 1v3.500z" fill="#2d7fc4" /></Svg>
        </TaskIcon>
        <TaskIcon label="Edge" className="ml-1">
          <Svg w={20} h={20}>
            <circle cx="10" cy="10" r="9.500" fill="#1b6fc2" />
            <path d="M0.600 8.500C1.500 3.500 6 0.500 10 0.500c6 0 9.500 4 9.500 8 0 3-2 4.500-4.500 4.500-2 0-3-1-2.500-2 .5-1 .5-4-3-4-3 0-8 1.500-8.900 1.500z" fill="#35c1c9" />
            <path d="M12 0.800c5 .7 7.500 4.200 7.500 7.700 0 3-2 4.500-4.500 4.500-2 0-3-1-2.500-2 2-3 1-7-.5-10.200z" fill="#69d36c" />
            <path d="M8 10c-1 5 4 8 9.500 5.500-3 4.500-9 5-12.500 1.500-2.500-3-1-7 3-7z" fill="#104f94" />
          </Svg>
        </TaskIcon>
        <TaskIcon label="Store" className="ml-1">
          <Svg w={20} h={20}><path d="M6 4V1.500h8V4" stroke="#4ba4dc" strokeWidth="1.300" /><path d="M0.500 4h19v13a2.500 2.500 0 0 1-2.500 2.500H3A2.500 2.500 0 0 1 .5 17z" fill="#f4f6f7" /><path d="M6.500 8h3v3h-3z" fill="#e8533a" /><path d="M10.500 8h3v3h-3z" fill="#76b843" /><path d="M6.500 12h3v3h-3z" fill="#2a9ddc" /><path d="M10.500 12h3v3h-3z" fill="#f5b52c" /></Svg>
        </TaskIcon>
        <TaskIcon label="Outlook" className="ml-1">
          <OfficeIcon letter="O" tile="#0f5fb3" a="#2384d8" b="#4cb5f0" c="#1f70c4" />
        </TaskIcon>
        <TaskIcon label="Excel" className="ml-1 bg-[#24323b]">
          <OfficeIcon letter="X" tile="#10743e" a="#219c56" b="#42c481" c="#15693b" />
          <span className="absolute bottom-0 left-[10px] h-[2px] w-[13px] rounded bg-[#62b6e8]" />
        </TaskIcon>
      </div>
      <div className="flex flex-1 basis-0 items-center justify-end pr-[14px]">
        <button type="button" aria-label="Hidden icons" className="mr-2"><Svg w={10} h={6}><path d="M0.500 5.500 5 1 9.500 5.500" stroke="#ddd" strokeWidth="1.100" /></Svg></button>
        <button type="button" aria-label="Update" className="mr-[11px]">
          <Svg w={14} h={14}><path d="M1 6a6 6 0 0 1 11-2M12.500 0.500V4H9M1 13V9.500h3M1.500 10A6 6 0 0 0 6 13" stroke="#ccd3d8" strokeWidth="1.200" /><circle cx="10" cy="10" r="3.600" fill="#f29a1f" /></Svg>
        </button>
        <button type="button" aria-label="Microphone" className="mr-[17px]">
          <Svg w={10} h={14}><rect x="3" y="0.500" width="4" height="8" rx="2" fill="#3c87a5" stroke="#7cc4e0" /><path d="M0.500 6.500a4.500 4.500 0 0 0 9 0M5 11v3" stroke="#7cc4e0" /></Svg>
        </button>
        <button type="button" className="mr-4 text-[10px]">ENG</button>
        <button type="button" aria-label="Network, volume and battery" className="mr-3 flex items-center gap-[6px]">
          <Svg w={14} h={12}><path d="M0.800 4.500a9 9 0 0 1 12.400 0M3 7a6 6 0 0 1 8 0M5 9.200a3 3 0 0 1 4 0" stroke="white" strokeWidth="1.200" /><circle cx="7" cy="10.500" r="1.200" fill="white" /></Svg>
          <Svg w={14} h={12}><path d="M0.500 4v4H3l3 3V1L3 4zM8 4a3 3 0 0 1 0 4M9.800 2.200a5.500 5.500 0 0 1 0 7.600M11.500 0.800a7.500 7.500 0 0 1 0 10.400" stroke="white" /></Svg>
          <Svg w={14} h={12}><path d="M5 2.500h6a1 1 0 0 1 1 1v5a1 1 0 0 1-1 1H4a1 1 0 0 1-1-1V7" stroke="white" strokeWidth="1.200" /><path d="M12.500 5h1v2.500h-1zM7 4.500h4v3.500H5z" fill="white" /><path d="M1 1v2M4 1v2M0.500 3h4v2a2 2 0 0 1-4 0zM2.500 6v3" stroke="white" /></Svg>
        </button>
        <time dir="rtl" className="mr-3 block font-['DejaVu_Sans_Condensed',sans-serif] text-[10px] leading-[13px]">
          <span className="block">٠١:٣٣ م</span>
          <span className="block">٢٠٢٣/٠٦/١٧</span>
        </time>
        <button type="button" aria-label="Do not disturb"><Svg w={12} h={13}><path d="M6 0.800c3.500.5 5.500 3 5.200 6A5.500 5.500 0 0 1 1 10c4 .5 7-4 5-9.200z" stroke="#e5e8ea" strokeWidth="1.100" /></Svg></button>
      </div>
    </footer>
  );
}

export default function App() {
  return (
    <div className={`flex h-screen min-h-[600px] w-full flex-col overflow-hidden bg-[#e6e6e6] ${UI}`}>
      <TitleBar />
      <Ribbon />
      <FormulaBar />
      <Sheet />
      <SheetTabs />
      <StatusBar />
      <Taskbar />
    </div>
  );
}
